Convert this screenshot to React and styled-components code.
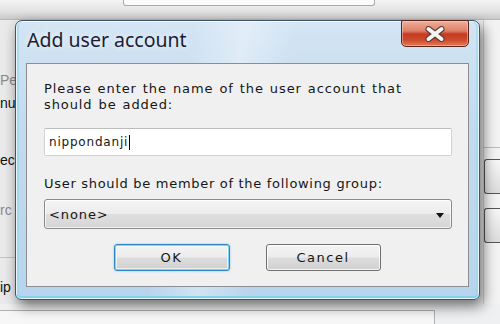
import React from "react";
import styled, { createGlobalStyle } from "styled-components";

const Global = createGlobalStyle`
  html, body { margin: 0; padding: 0; }
  body { width: 500px; height: 324px; overflow: hidden; background: #eceeef; }
`;

const Page = styled.div`
  position: relative;
  width: 500px;
  height: 324px;
  overflow: hidden;
  display: flex;
  flex-direction: column;
  background: #eef0f1;
  font-family: "Liberation Sans", Arial, sans-serif;
`;

const TopStrip = styled.div`
  height: 20px;
  flex: none;
  background: linear-gradient(180deg, #f4f4f4 0%, #e2e2e2 60%, #c9c9c9 100%);
  border-bottom: 1px solid #b8b8b8;
  box-sizing: border-box;
  display: flex;
`;

const FieldStub = styled.div`
  margin-left: 123px;
  width: 250px;
  height: 5px;
  background: #fbfbfb;
  border: 1px solid #a9a9a9;
  border-top: none;
  border-radius: 0 0 3px 3px;
`;

const MainRow = styled.div`
  flex: 1;
  display: flex;
`;

const SideLabels = styled.div`
  width: 40px;
  display: flex;
  flex-direction: column;
  background: #eaeaea;
`;

const SideLabel = styled.div`
  margin-top: ${(p) => p.$gap}px;
  height: 16px;
  line-height: 16px;
  font-size: 14px;
  color: ${(p) => (p.$dim ? "#8a8a8a" : "#111")};
  white-space: nowrap;
`;

const SideRule = styled.div`
  margin-top: ${(p) => p.$gap}px;
  height: 1px;
  background: #c4c4c4;
`;

const Middle = styled.div`
  flex: 1;
`;

const RightColumn = styled.div`
  width: 16px;
  border-left: 1px solid #cfcfcf;
  display: flex;
  flex-direction: column;
  background: #f3f3f3;
`;

const RightRule = styled.div`
  margin-top: 127px;
  height: 1px;
  background: #bdbdbd;
`;

const RightBox = styled.div`
  margin-top: ${(p) => p.$gap}px;
  height: 33px;
  border: 1px solid #555;
  border-right: none;
  border-radius: 3px 0 0 3px;
  background: linear-gradient(180deg, #f6f6f6, #dcdcdc);
`;

const BottomStrip = styled.div`
  height: 20px;
  flex: none;
  display: flex;
  align-items: flex-start;
`;

const BottomBox = styled.div`
  margin-top: 6px;
  width: 434px;
  height: 20px;
  border: 1px solid #b0b0b0;
  border-left: none;
  background: #f7f7f7;
`;

const Window = styled.div`
  position: absolute;
  left: 15px;
  top: 20px;
  width: 465px;
  height: 280px;
  box-sizing: border-box;
  display: flex;
  flex-direction: column;
  padding: 0 10px 12px 10px;
  border: 1px solid #3f5466;
  border-radius: 7px 7px 6px 6px;
  background:
    linear-gradient(100deg, rgba(255,255,255,0) 35%, rgba(255,255,255,0.35) 45%, rgba(255,255,255,0) 55%),
    linear-gradient(180deg, #d4e5f4 0%, #c4dbef 35%, #b8d4ec 100%);
  box-shadow:
    inset 0 0 0 1px rgba(255,255,255,0.75),
    inset 0 -3px 0 #86d2ee,
    inset 3px 0 0 rgba(150,215,240,0.6),
    inset -3px 0 0 rgba(150,215,240,0.6),
    3px 6px 14px rgba(0,0,0,0.55);
`;

const TitleBar = styled.div`
  height: 42px;
  flex: none;
  display: flex;
  justify-content: space-between;
  align-items: flex-start;
`;

const Title = styled.div`
  margin-top: 6px;
  margin-left: 1px;
  font-family: "Noto Sans", "Open Sans", sans-serif;
  font-size: 19.5px;
  line-height: 26px;
  color: #1c1c34;
  text-shadow: 0 0 6px rgba(255,255,255,0.9);
`;

const CloseButton = styled.div`
  margin-top: -1px;
  width: 68px;
  height: 27px;
  box-sizing: border-box;
  border: 1px solid #5c2418;
  border-radius: 2px 2px 5px 5px;
  background: linear-gradient(180deg, #eeb09c 0%, #df8068 40%, #c63a22 52%, #cc4a2c 75%, #e47a55 100%);
  box-shadow: inset 0 0 0 1px rgba(255,220,210,0.45);
  display: flex;
  align-items: center;
  justify-content: center;
`;

const Client = styled.div`
  flex: 1;
  display: flex;
  flex-direction: column;
  background: #f0f0f0;
  border: 1px solid #8b8f93;
  padding: 17px 16px 0 17px;
  font-family: "DejaVu Sans", "Liberation Sans", sans-serif;
  font-size: 13px;
  letter-spacing: 0.9px;
  color: #161616;
`;

const Prompt = styled.div`
  line-height: 16px;
  white-space: nowrap;
  word-spacing: 1px;
`;

const TextBox = styled.div`
  margin-top: ${(p) => p.$gap}px;
  height: 28px;
  box-sizing: border-box;
  background: #fff;
  border: 1px solid #d2d2d2;
  border-top-color: #bcbcbc;
  border-radius: 2px;
  display: flex;
  align-items: center;
  padding-left: 4px;
  font-size: 12px;
  letter-spacing: 0.8px;
`;

const Caret = styled.span`
  display: inline-block;
  width: 1px;
  height: 15px;
  background: #000;
  margin-left: 1px;
`;

const Label = styled.div`
  margin-top: ${(p) => p.$gap}px;
  line-height: 16px;
  white-space: nowrap;
  letter-spacing: 0.7px;
`;

const Select = styled.div`
  margin-top: 7px;
  height: 30px;
  box-sizing: border-box;
  border: 1px solid #8a8a8a;
  border-radius: 3px;
  background: linear-gradient(180deg, #f5f5f5 0%, #ececec 48%, #dedede 52%, #d6d6d6 100%);
  box-shadow: inset 0 0 0 1px rgba(255,255,255,0.7);
  display: flex;
  align-items: center;
  justify-content: space-between;
  padding: 0 7px 0 4px;
`;

const Arrow = styled.span`
  width: 0;
  height: 0;
  border-left: 4px solid transparent;
  border-right: 4px solid transparent;
  border-top: 5px solid #111;
  margin-top: 2px;
`;

const ButtonRow = styled.div`
  margin-top: 15px;
  display: flex;
  justify-content: center;
  gap: 36px;
  padding-right: 2px;
`;

const Button = styled.div`
  width: ${(p) => p.$w}px;
  height: 27px;
  box-sizing: border-box;
  border: 1px solid ${(p) => (p.$default ? "#2f88c0" : "#707070")};
  border-radius: 3px;
  background: linear-gradient(180deg, #f4f4f4 0%, #ececec 48%, #dddddd 52%, #d0d0d0 100%);
  box-shadow: ${(p) =>
    p.$default
      ? "inset 0 0 0 1px #7fd3f2, inset 0 0 0 2px rgba(255,255,255,0.6), 0 0 2px rgba(60,160,220,0.6)"
      : "inset 0 0 0 1px rgba(255,255,255,0.8)"};
  display: flex;
  align-items: center;
  justify-content: center;
  font-size: 13px;
  letter-spacing: 1.5px;
`;

function CloseGlyph() {
  return (
    <svg width="22" height="16" viewBox="0 0 22 16">
      <path d="M4.5 3 L17.5 13 M17.5 3 L4.5 13" stroke="#5b3b36" strokeWidth="6" strokeLinecap="round" />
      <path d="M4.5 3 L17.5 13 M17.5 3 L4.5 13" stroke="#f4f4f4" strokeWidth="4" strokeLinecap="round" />
    </svg>
  );
}

export default function App() {
  return (
    <>
      <Global />
      <Page>
        <TopStrip>
          <FieldStub />
        </TopStrip>
        <MainRow>
          <SideLabels>
            <SideLabel $gap={52} $dim>Pe</SideLabel>
            <SideLabel $gap={7}>nu</SideLabel>
            <SideLabel $gap={41}>ec</SideLabel>
            <SideLabel $gap={34} $dim>rc</SideLabel>
            <SideRule $gap={39} />
            <SideLabel $gap={21}>ip</SideLabel>
          </SideLabels>
          <Middle />
          <RightColumn>
            <RightRule />
            <RightBox $gap={11} />
            <RightBox $gap={14} />
          </RightColumn>
        </MainRow>
        <BottomStrip>
          <BottomBox />
        </BottomStrip>

        <Window>
          <TitleBar>
            <Title>Add user account</Title>
            <CloseButton>
              <CloseGlyph />
            </CloseButton>
          </TitleBar>
          <Client>
            <Prompt>
              Please enter the name of the user account that
              <br />
              should be added:
            </Prompt>
            <TextBox $gap={15}>
              nippondanji
              <Caret />
            </TextBox>
            <Label $gap={20}>User should be member of the following group:</Label>
            <Select>
              <span>&lt;none&gt;</span>
              <Arrow />
            </Select>
            <ButtonRow>
              <Button $w={116} $default>OK</Button>
              <Button $w={115}>Cancel</Button>
            </ButtonRow>
          </Client>
        </Window>
      </Page>
    </>
  );
}
